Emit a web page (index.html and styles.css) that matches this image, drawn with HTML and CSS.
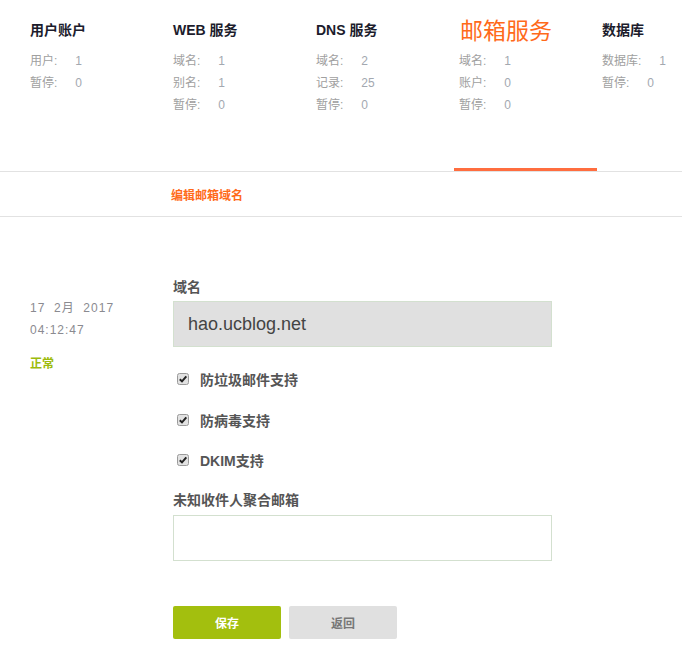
FILE: index.html
```html
<!DOCTYPE html>
<html lang="zh">
<head>
<meta charset="utf-8">
<title>编辑邮箱域名</title>
<link rel="stylesheet" href="styles.css">
</head>
<body>
<header class="stats">
  <div class="col">
    <div class="col-title"><span>用户账户</span></div>
    <div class="row"><span class="k">用户:</span><span class="v">1</span></div>
    <div class="row"><span class="k">暂停:</span><span class="v">0</span></div>
  </div>
  <div class="col">
    <div class="col-title"><span>WEB 服务</span></div>
    <div class="row"><span class="k">域名:</span><span class="v">1</span></div>
    <div class="row"><span class="k">别名:</span><span class="v">1</span></div>
    <div class="row"><span class="k">暂停:</span><span class="v">0</span></div>
  </div>
  <div class="col">
    <div class="col-title"><span>DNS 服务</span></div>
    <div class="row"><span class="k">域名:</span><span class="v">2</span></div>
    <div class="row"><span class="k">记录:</span><span class="v">25</span></div>
    <div class="row"><span class="k">暂停:</span><span class="v">0</span></div>
  </div>
  <div class="col active">
    <div class="col-title"><span>邮箱服务</span></div>
    <div class="row"><span class="k">域名:</span><span class="v">1</span></div>
    <div class="row"><span class="k">账户:</span><span class="v">0</span></div>
    <div class="row"><span class="k">暂停:</span><span class="v">0</span></div>
  </div>
  <div class="col">
    <div class="col-title"><span>数据库</span></div>
    <div class="row"><span class="k">数据库:</span><span class="v">1</span></div>
    <div class="row"><span class="k">暂停:</span><span class="v">0</span></div>
  </div>
</header>

<nav class="tabs">
  <span class="tab">编辑邮箱域名</span>
</nav>

<main class="content">
  <aside class="meta">
    <div class="date">17&nbsp; 2月&nbsp; 2017</div>
    <div class="date">04:12:47</div>
    <div class="status">正常</div>
  </aside>
  <form class="form">
    <label class="field-label">域名</label>
    <div class="input readonly">hao.ucblog.net</div>

    <div class="checks">
      <div class="check">
        <svg class="box" width="12" height="12" viewBox="0 0 12 12"><rect x="0.5" y="0.5" width="11" height="11" rx="2" fill="#e2e2e2" stroke="#9a9a9a"/><path d="M2.8 6.2 L5 8.4 L9.3 3.4" fill="none" stroke="#222" stroke-width="2"/></svg>
        <span>防垃圾邮件支持</span>
      </div>
      <div class="check">
        <svg class="box" width="12" height="12" viewBox="0 0 12 12"><rect x="0.5" y="0.5" width="11" height="11" rx="2" fill="#e2e2e2" stroke="#9a9a9a"/><path d="M2.8 6.2 L5 8.4 L9.3 3.4" fill="none" stroke="#222" stroke-width="2"/></svg>
        <span>防病毒支持</span>
      </div>
      <div class="check">
        <svg class="box" width="12" height="12" viewBox="0 0 12 12"><rect x="0.5" y="0.5" width="11" height="11" rx="2" fill="#e2e2e2" stroke="#9a9a9a"/><path d="M2.8 6.2 L5 8.4 L9.3 3.4" fill="none" stroke="#222" stroke-width="2"/></svg>
        <span>DKIM支持</span>
      </div>
    </div>

    <label class="field-label second">未知收件人聚合邮箱</label>
    <div class="input empty"></div>

    <div class="buttons">
      <button type="button" class="btn save">保存</button>
      <button type="button" class="btn back">返回</button>
    </div>
  </form>
</main>
</body>
</html>
```

FILE: styles.css
```css
* { box-sizing: border-box; }

body {
  margin: 0;
  background: #fff;
  font-family: "Liberation Sans", "Noto Sans CJK SC", sans-serif;
  color: #555;
}

.stats {
  display: flex;
  height: 172px;
  padding-left: 25px;
  border-bottom: 1px solid #e2e2e2;
  overflow: hidden;
}

.col {
  flex: 0 0 143px;
  height: 171px;
  padding: 14px 0 0 5px;
}

.col.active {
  border-bottom: 3px solid #ff6d3f;
}

.col-title {
  height: 30px;
  display: flex;
  align-items: center;
  font-size: 14px;
  font-weight: bold;
  color: #1c1c2c;
  margin-bottom: 6px;
  white-space: nowrap;
}

.col.active .col-title {
  font-size: 23px;
  font-weight: normal;
  color: #ff6a1a;
  margin-left: 1px;
}

.row {
  font-size: 12px;
  line-height: 22px;
  color: #a0a0a0;
  white-space: nowrap;
}

.row .k {
  display: inline-block;
  margin-right: 18px;
}

.row .v {
  color: #a3a8b0;
}

.tabs {
  height: 45px;
  border-bottom: 1px solid #e2e2e2;
  display: flex;
  align-items: center;
  padding: 3px 0 0 171px;
}

.tab {
  font-size: 12px;
  font-weight: bold;
  color: #ff6a1a;
  line-height: 16px;
}

.content {
  display: flex;
  padding: 60px 0 30px 30px;
}

.meta {
  flex: 0 0 143px;
  padding-top: 20px;
}

.date {
  font-size: 12px;
  line-height: 22px;
  letter-spacing: 1px;
  color: #8a8a90;
}

.status {
  margin-top: 15px;
  font-size: 12px;
  line-height: 16px;
  font-weight: bold;
  color: #9cbb0c;
}

.form {
  width: 379px;
  display: flex;
  flex-direction: column;
}

.field-label {
  font-size: 14px;
  font-weight: bold;
  line-height: 20px;
  color: #555;
  margin-bottom: 4px;
}

.field-label.second {
  margin-bottom: 5px;
}

.input {
  height: 46px;
  border: 1px solid #d3e0cf;
  padding: 0 14px;
  display: flex;
  align-items: center;
  font-size: 18px;
  color: #444;
}

.input.readonly {
  background: #e0e0e0;
}

.input.empty {
  background: #fff;
}

.checks {
  display: flex;
  flex-direction: column;
  gap: 20.5px;
  margin: 22px 0 20px;
}

.check {
  display: flex;
  align-items: center;
  height: 20px;
  padding-left: 4px;
  font-size: 14px;
  font-weight: bold;
  color: #555;
}

.check .box {
  flex: 0 0 12px;
  margin-right: 11px;
}

.buttons {
  display: flex;
  gap: 8px;
  margin-top: 45px;
}

.btn {
  width: 108px;
  height: 33px;
  border: none;
  border-radius: 2px;
  font-family: "Liberation Sans", "Noto Sans CJK SC", sans-serif;
  font-size: 12px;
  font-weight: bold;
  cursor: pointer;
}

.btn.save {
  background: #a3bf0e;
  color: #fff;
}

.btn.back {
  background: #e0e0e0;
  color: #777;
}
```
